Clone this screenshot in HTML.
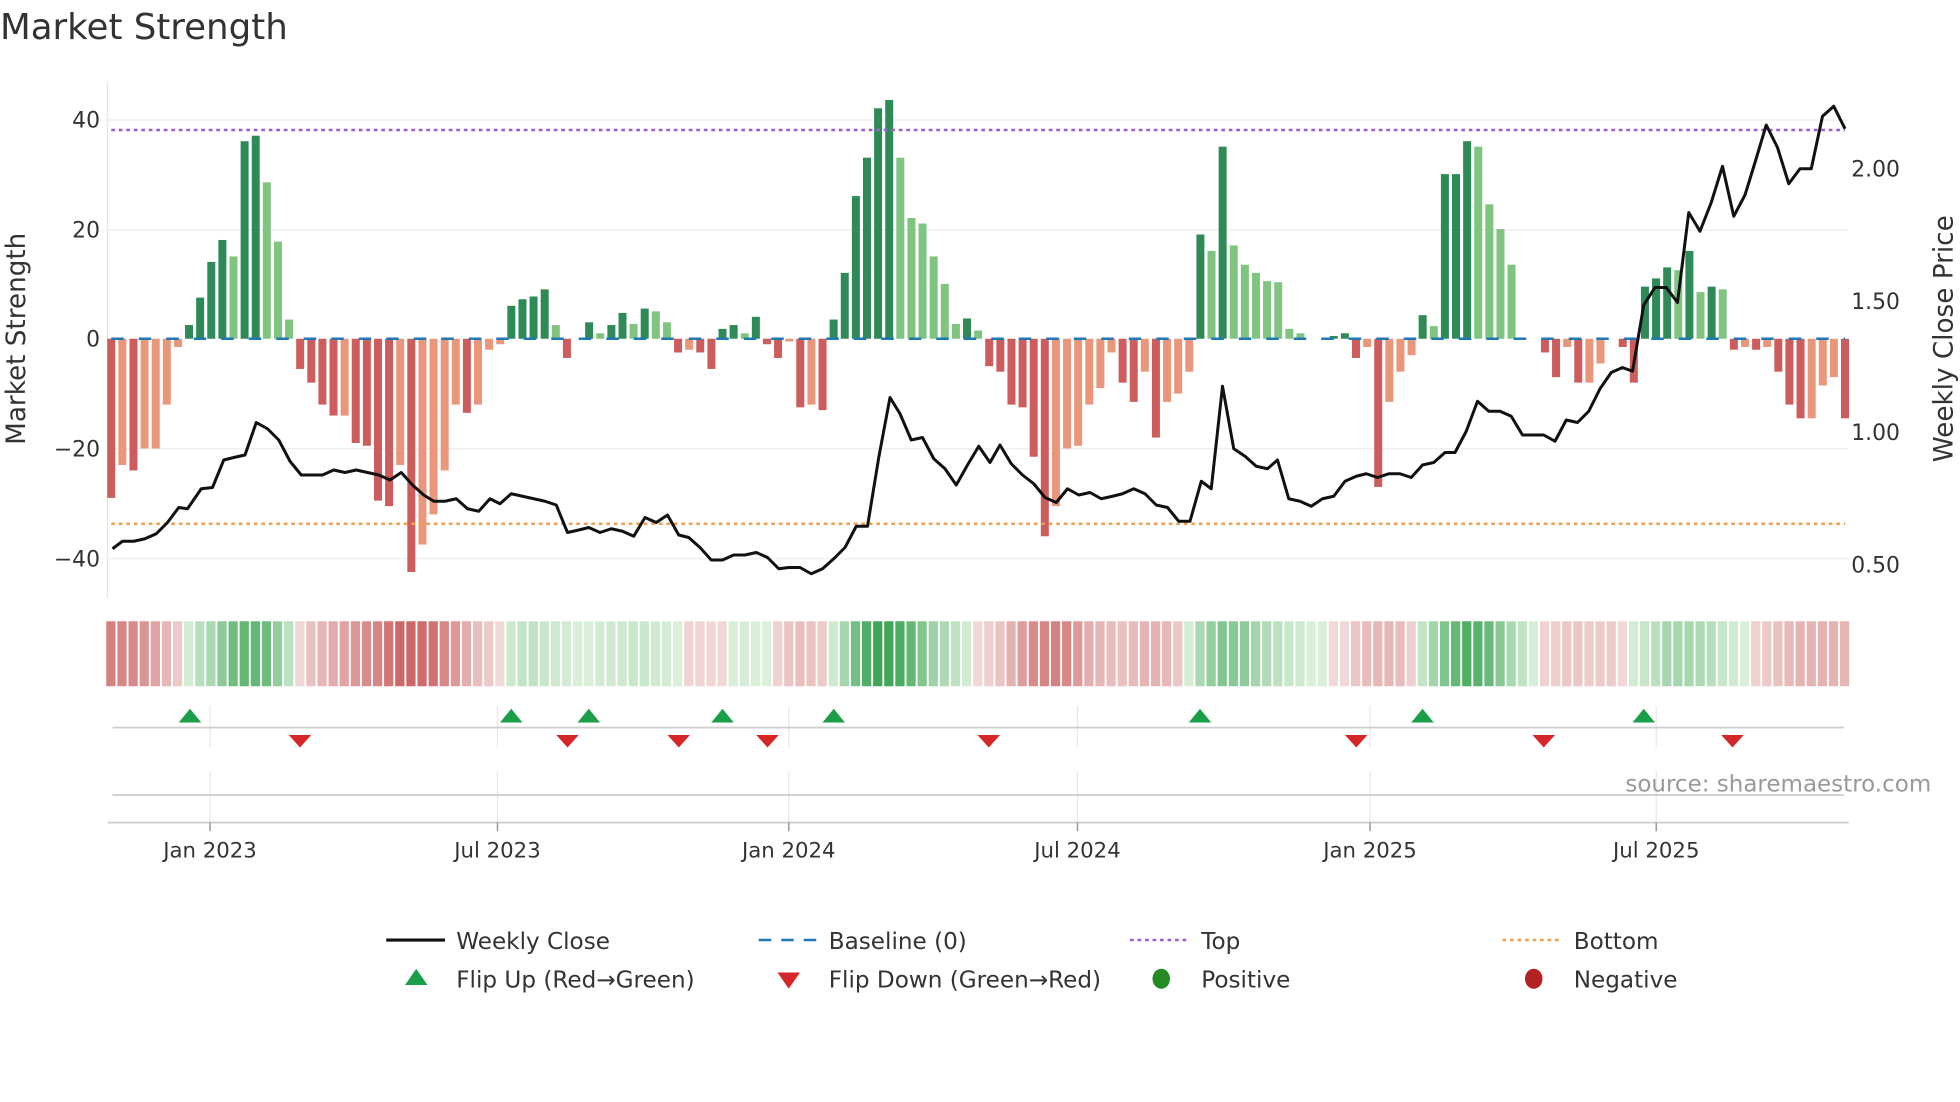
<!DOCTYPE html>
<html><head><meta charset="utf-8"><style>
html,body{margin:0;padding:0;background:#fff;width:1960px;height:1102px;overflow:hidden}
svg text{font-family:"DejaVu Sans","Liberation Sans",sans-serif;fill:#333}
</style></head><body>
<svg id="s" width="1960" height="1102" viewBox="0 0 1568 881.6" preserveAspectRatio="none" xmlns="http://www.w3.org/2000/svg">
<text x="0" y="31" font-size="28.5">Market Strength</text>
<g stroke="#ececf2" stroke-width="1">
<line x1="86" x2="1479" y1="96" y2="96"/><line x1="86" x2="1479" y1="184" y2="184"/>
<line x1="86" x2="1479" y1="359" y2="359"/><line x1="86" x2="1479" y1="447" y2="447"/>
</g>
<line x1="86" x2="86" y1="65" y2="478" stroke="#e6e6e6"/>
<g font-size="17.5" text-anchor="end">
<text x="80" y="102">40</text><text x="80" y="190">20</text><text x="80" y="277">0</text><text x="80" y="365">−20</text><text x="80" y="453">−40</text>
</g>
<g font-size="17.5">
<text x="1481" y="141">2.00</text><text x="1481" y="247">1.50</text><text x="1481" y="352">1.00</text><text x="1481" y="458">0.50</text>
</g>
<text font-size="21" text-anchor="middle" transform="translate(20,271) rotate(-90)">Market Strength</text>
<text font-size="21" text-anchor="middle" transform="translate(1562,271) rotate(-90)">Weekly Close Price</text>
<g id="bars"></g>
<line x1="89" x2="1476" y1="271" y2="271" stroke="#1f77b4" stroke-width="2" stroke-dasharray="10,12"/>
<line x1="89" x2="1476" y1="104" y2="104" stroke="#9d5fd6" stroke-width="2" stroke-dasharray="3,3"/>
<line x1="89" x2="1476" y1="419" y2="419" stroke="#f0a050" stroke-width="2" stroke-dasharray="3,3"/>
<polyline id="price" fill="none" stroke="#111" stroke-width="2.4" stroke-linejoin="round"/>
<g id="band"></g>
<g stroke="#e8e8e8" stroke-width="1">
<line x1="168" x2="168" y1="565" y2="598"/><line x1="398" x2="398" y1="565" y2="598"/><line x1="631" x2="631" y1="565" y2="598"/><line x1="862" x2="862" y1="565" y2="598"/><line x1="1096" x2="1096" y1="565" y2="598"/><line x1="1325" x2="1325" y1="565" y2="598"/>
<line x1="168" x2="168" y1="617" y2="658"/><line x1="398" x2="398" y1="617" y2="658"/><line x1="631" x2="631" y1="617" y2="658"/><line x1="862" x2="862" y1="617" y2="658"/><line x1="1096" x2="1096" y1="617" y2="658"/><line x1="1325" x2="1325" y1="617" y2="658"/>
</g>
<line x1="90" x2="1475" y1="582" y2="582" stroke="#cfcfcf" stroke-width="1.5"/>
<line x1="90" x2="1475" y1="636" y2="636" stroke="#cfcfcf" stroke-width="1.5"/>
<line x1="86" x2="1479" y1="658" y2="658" stroke="#cfcfcf" stroke-width="1.5"/>
<g stroke="#999" stroke-width="1.2">
<line x1="168" x2="168" y1="658" y2="665"/><line x1="398" x2="398" y1="658" y2="665"/><line x1="631" x2="631" y1="658" y2="665"/><line x1="862" x2="862" y1="658" y2="665"/><line x1="1096" x2="1096" y1="658" y2="665"/><line x1="1325" x2="1325" y1="658" y2="665"/>
</g>
<g id="mk"></g>
<text x="1545" y="633" font-size="18.4" text-anchor="end" style="fill:#999">source: sharemaestro.com</text>
<g font-size="17" text-anchor="middle">
<text x="168" y="686">Jan 2023</text><text x="398" y="686">Jul 2023</text><text x="631" y="686">Jan 2024</text><text x="862" y="686">Jul 2024</text><text x="1096" y="686">Jan 2025</text><text x="1325" y="686">Jul 2025</text>
</g>
<g font-size="18.5">
<line x1="309" x2="356" y1="752" y2="752" stroke="#111" stroke-width="2.5"/>
<text x="365" y="759">Weekly Close</text>
<line x1="607" x2="654" y1="752" y2="752" stroke="#1f77b4" stroke-width="2" stroke-dasharray="10,8"/>
<text x="663" y="759">Baseline (0)</text>
<line x1="904" x2="951" y1="752" y2="752" stroke="#9d5fd6" stroke-width="2" stroke-dasharray="3,3"/>
<text x="961" y="759">Top</text>
<line x1="1202" x2="1249" y1="752" y2="752" stroke="#f0a050" stroke-width="2" stroke-dasharray="3,3"/>
<text x="1259" y="759">Bottom</text>
<polygon points="324,788 333,775 342,788" fill="#1a9e48"/>
<text x="365" y="790">Flip Up (Red→Green)</text>
<polygon points="622,778 640,778 631,791" fill="#d62728"/>
<text x="663" y="790">Flip Down (Green→Red)</text>
<ellipse cx="929" cy="783" rx="7" ry="8" fill="#228b22"/>
<text x="961" y="790">Positive</text>
<ellipse cx="1227" cy="783" rx="7" ry="8" fill="#b22222"/>
<text x="1259" y="790">Negative</text>
</g>
</svg>
<script>
var V=[-29,-23,-24,-20,-20,-12,-1.5,2.5,7.5,14,18,15,36,37,28.5,17.7,3.5,-5.5,-8,-12,-14,-14,-19,-19.5,-29.5,-30.5,-23,-42.5,-37.5,-32,-24,-12,-13.5,-12,-2,-1,6,7.2,7.7,9,2.5,-3.5,0,3,1,2.5,4.7,2.7,5.5,5,3,-2.5,-2,-2.5,-5.5,1.8,2.5,1,4,-1,-3.5,-0.5,-12.5,-12,-13,3.5,12,26,33,42,43.5,33,22,21,15,10,2.7,3.7,1.5,-5,-6,-12,-12.5,-21.5,-36,-30.5,-20,-19.5,-12,-9,-2.5,-8,-11.5,-6,-18,-11.5,-10,-6,19,16,35,17,13.5,12,10.5,10.3,1.8,1,0,0,0.5,1,-3.5,-1.5,-27,-11.5,-6,-3,4.3,2.3,30,30,36,35,24.5,20,13.5,0,0,-2.5,-7,-1.5,-8,-8,-4.5,0,-1.5,-8,9.5,11,13,12.5,16,8.5,9.5,9,-2,-1.5,-2,-1.5,-6,-12,-14.5,-14.5,-8.5,-7,-14.5];
var N=V.length,x0=89,step=(1476-89)/(N-1),ns="http://www.w3.org/2000/svg";
function el(t,a,p){var e=document.createElementNS(ns,t);for(var k in a)e.setAttribute(k,a[k]);p.appendChild(e);return e}
var B=document.getElementById('bars'),BD=document.getElementById('band');
for(var i=0;i<N;i++){var v=V[i],x=x0+i*step,prev=i?V[i-1]:0,y0=271,y1=271-v*4.39;
 var up=v>=prev,c=v>=0?(up?'#2e8b57':'#7fc47f'):(up?'#e9967a':'#cd5c5c');
 if(v!=0)el('rect',{x:x-3.2,y:Math.min(y0,y1),width:6.4,height:Math.abs(y1-y0),fill:c},B);
 var s=0,cnt=0;for(var j=Math.max(0,i-2);j<=Math.min(N-1,i+2);j++){s+=V[j];cnt++}s/=cnt;
 var t=Math.min(1,Math.abs(s)/38),col;
 if(s>=0){col='rgb('+Math.round(220-(220-50)*t)+','+Math.round(240-(240-160)*t)+','+Math.round(220-(220-75)*t)+')'}
 else{col='rgb('+Math.round(242-(242-200)*t)+','+Math.round(218-(218-85)*t)+','+Math.round(218-(218-85)*t)+')'}
 el('rect',{x:x-4,y:497,width:7.4,height:52,fill:col},BD);}
var P="90,439 98,433 107,433 116,431 125,427 134,418 143,406 150,407 161,391 170,390 179,368 187,366 196,364 205,338 214,343 223,352 232,369 241,380 250,380 258,380 267,376 276,378 285,376 294,378 303,380 312,384 321,378 330,388 339,396 347,401 356,401 365,399 374,407 383,409 392,399 400,403 409,395 418,397 427,399 436,401 445,404 454,426 463,424 471,422 480,426 489,423 498,425 507,429 516,414 525,418 534,412 543,428 551,430 560,438 569,448 578,448 587,444 596,444 605,442 614,446 623,455 631,454 640,454 649,459 658,455 667,447 676,438 685,421 694,421 703,366 712,318 720,331 729,352 738,350 747,367 756,375 765,388 774,372 783,357 792,370 800,356 809,371 818,380 827,387 836,398 845,402 854,391 863,396 872,394 881,399 890,397 898,395 907,391 916,395 925,404 934,406 943,417 952,417 961,385 969,391 978,309 987,359 996,365 1005,373 1014,375 1022,368 1031,399 1040,401 1049,405 1058,399 1067,397 1076,385 1085,381 1093,379 1102,382 1111,379 1120,379 1129,382 1138,372 1147,370 1156,362 1164,362 1173,345 1182,321 1191,329 1200,329 1209,333 1218,348 1227,348 1235,348 1244,353 1253,336 1262,338 1271,329 1280,311 1289,298 1298,294 1306,297 1315,244 1324,230 1333,230 1342,242 1351,170 1360,185 1369,162 1378,133 1387,173 1396,156 1404,130 1413,100 1422,118 1431,147 1440,135 1449,135 1458,93 1467,85 1476,103";
document.getElementById('price').setAttribute('points',P);
var M=document.getElementById('mk');
[152,409,471,578,667,960,1138,1315].forEach(function(x){el('polygon',{points:(x-9)+',578 '+x+',567 '+(x+9)+',578',fill:'#1a9e48'},M)});
[240,454,543,614,791,1085,1235,1386].forEach(function(x){el('polygon',{points:(x-9)+',588 '+(x+9)+',588 '+x+',598',fill:'#d62728'},M)});
</script>
</body></html>
